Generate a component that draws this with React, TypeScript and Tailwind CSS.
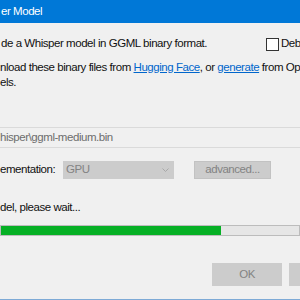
function App() {
  return (
    <div
      className="w-[300px] h-[300px] overflow-hidden bg-[#f0f0f0] flex flex-col text-[11.5px] tracking-[-0.45px] text-[#111111]"
      style={{ fontFamily: '"Liberation Sans", Arial, sans-serif' }}
    >
      {/* Title bar */}
      <div className="h-[23px] shrink-0 bg-[#0078d7] text-white flex items-center pl-[1px]">
        er Model
      </div>

      {/* Intro */}
      <div className="mt-[13px] h-[16px] shrink-0 flex items-center">
        <span className="pl-[1px] w-[266px] shrink-0 whitespace-nowrap">de a Whisper model in GGML binary format.</span>
        <span className="w-[13px] h-[13px] bg-white border border-[#333333] shrink-0" />
        <span className="ml-[2px] whitespace-nowrap">Debug</span>
      </div>

      <div className="mt-[8px] leading-[15px] whitespace-nowrap shrink-0">
        <div>
          nload these binary files from{' '}
          <span className="text-[#0066cc] underline">Hugging Face</span>, or{' '}
          <span className="text-[#0066cc] underline">generate</span> from Op-
        </div>
        <div>els.</div>
      </div>

      {/* Path box */}
      <div className="mt-[37px] h-[21px] shrink-0 border-y border-[#dadada] flex items-center text-[#6d6d6d] whitespace-nowrap">
        hisper\ggml-medium.bin
      </div>

      {/* Implementation row */}
      <div className="mt-[13px] flex items-center h-[18px] shrink-0">
        <span className="w-[63px] shrink-0 whitespace-nowrap">ementation:</span>
        <div className="w-[111px] h-[18px] shrink-0 bg-[#cccccc] flex items-center justify-between pl-[3px] pr-[5px] text-[#838383]">
          <span>GPU</span>
          <svg width="7" height="4" viewBox="0 0 7 4" fill="none">
            <path d="M0.5 0.5 L3.5 3.5 L6.5 0.5" stroke="#a8a8a8" strokeWidth="1" />
          </svg>
        </div>
        <div className="ml-[20px] w-[77px] h-[18px] shrink-0 bg-[#cccccc] border border-[#c2c2c2] flex items-center justify-center text-[#838383]">
          advanced...
        </div>
      </div>

      {/* Status */}
      <div className="mt-[21px] h-[16px] shrink-0 flex items-center whitespace-nowrap">del, please wait...</div>

      {/* Progress */}
      <div className="mt-[9px] h-[11px] shrink-0 border border-[#bcbcbc] bg-[#e6e6e6] flex">
        <div className="w-[220px] h-full bg-[#06b025]" />
      </div>

      {/* Buttons */}
      <div className="mt-[27px] h-[23px] shrink-0 flex">
        <div className="ml-[212px] w-[70px] h-full shrink-0 bg-[#cccccc] flex items-center justify-center text-[#838383]">
          OK
        </div>
        <div className="ml-[7px] w-[70px] h-full bg-[#cccccc] shrink-0" />
      </div>

      <div className="mt-auto h-[1px] shrink-0 bg-[#7eaad6]" />
    </div>
  )
}

export default App
